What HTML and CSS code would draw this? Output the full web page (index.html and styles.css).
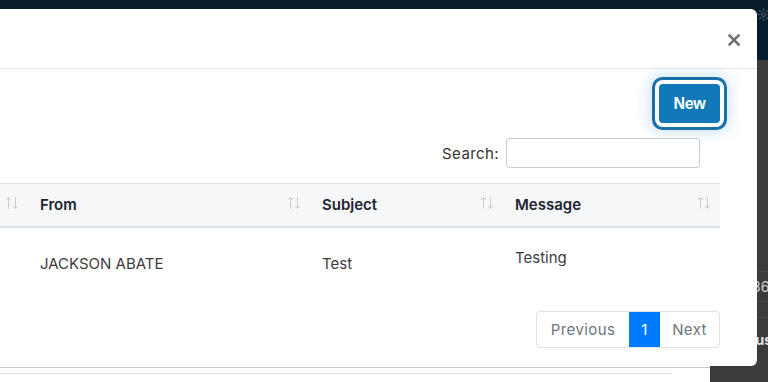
FILE: index.html
```html
<!DOCTYPE html>
<html lang="en">
<head>
  <meta charset="UTF-8" />
  <meta name="viewport" content="width=device-width, initial-scale=1.0"/>
  <title>Messages</title>
  <link rel="stylesheet" href="styles.css">
</head>
<body>

  <div class="topbar">
    <span class="topbar-icon">☼</span>
  </div>

  <div class="page">
    <div class="content">
      <div class="rule rule-dark"></div>
      <div class="rule rule-light"></div>
    </div>
    <div class="side">
      <div class="side-row side-row-first"></div>
      <div class="side-row side-row-num">36</div>
      <div class="side-row side-row-thin"></div>
      <div class="side-row side-row-bold">Status</div>
    </div>
  </div>

  <div class="modal">
    <div class="modal-header">
      <button class="close" aria-label="Close">
        <svg width="12" height="12" viewBox="0 0 12 12">
          <path d="M1.5 1.5 L10.5 10.5 M10.5 1.5 L1.5 10.5" stroke="#737373" stroke-width="2.6" stroke-linecap="square"/>
        </svg>
      </button>
    </div>

    <div class="modal-body">
      <div class="toolbar">
        <button class="btn-new">New</button>
      </div>

      <div class="filter">
        <label for="search">Search:</label>
        <input type="search" id="search">
      </div>

      <table class="messages">
        <thead>
          <tr>
            <th class="col-first"><div class="th-inner"><span></span><span class="sort"></span></div></th>
            <th class="col-from"><div class="th-inner"><span>From</span><span class="sort"></span></div></th>
            <th class="col-subject"><div class="th-inner"><span>Subject</span><span class="sort"></span></div></th>
            <th class="col-message"><div class="th-inner"><span>Message</span><span class="sort"></span></div></th>
          </tr>
        </thead>
        <tbody>
          <tr>
            <td></td>
            <td>JACKSON ABATE</td>
            <td>Test</td>
            <td class="cell-top">Testing</td>
          </tr>
        </tbody>
      </table>

      <div class="pager">
        <div class="pagination">
          <a class="page-link">Previous</a>
          <a class="page-link active">1</a>
          <a class="page-link">Next</a>
        </div>
      </div>
    </div>
  </div>

  <script>
    // sort arrows for every header cell
    const arrows = '<svg width="14" height="14" viewBox="0 0 14 14"><path d="M3.5 13 V1.5 M1 4 L3.5 1.5 L6 4 M10.5 1 V12.5 M8 10 L10.5 12.5 L13 10" stroke="#c9cdd2" stroke-width="1" fill="none"/></svg>';
    document.querySelectorAll('.sort').forEach(el => el.innerHTML = arrows);
  </script>

</body>
</html>
```

FILE: styles.css
```css
body {
  margin: 0;
  background-color: #ffffff;
  font-family: 'Inter', 'Noto Sans', sans-serif;
  overflow: hidden;
  height: 382px;
}

.topbar {
  height: 60px;
  background-color: #061b2c;
  display: flex;
  justify-content: flex-end;
}

.topbar-icon {
  color: #55606a;
  font-size: 14px;
  margin: 6px 0 0 0;
  width: 12px;
  overflow: hidden;
}

.page {
  display: flex;
  height: 322px;
}

.content {
  width: 710px;
  display: flex;
  flex-direction: column;
  justify-content: flex-end;
  padding-bottom: 8px;
  box-sizing: border-box;
}

.rule {
  height: 1px;
}

.rule-dark {
  background-color: #c9c9c9;
  margin-bottom: 5px;
  width: 710px;
}

.rule-light {
  background-color: #e1e1e1;
  width: 672px;
}

.side {
  flex: 1;
  background-color: #3b3b3b;
  color: #cfcfcf;
  font-size: 14px;
  white-space: nowrap;
  overflow: hidden;
}

.side-row {
  border-bottom: 1px solid #4a4a4a;
  padding-left: 42px;
  box-sizing: border-box;
}

.side-row-first {
  height: 212px;
}

.side-row-num {
  height: 30px;
  line-height: 30px;
}

.side-row-thin {
  height: 16px;
}

.side-row-bold {
  font-weight: 700;
  color: #e6e6e6;
  padding-left: 18px;
  height: 48px;
  line-height: 44px;
  border-bottom: 0;
}

/* modal */

.modal {
  position: absolute;
  top: 9px;
  left: -50px;
  width: 807px;
  height: 357px;
  background-color: #fff;
  border-radius: 6px;
  display: flex;
  flex-direction: column;
}

.modal-header {
  height: 59px;
  border-bottom: 1px solid #e6e9ec;
  display: flex;
  justify-content: flex-end;
  align-items: center;
  padding-right: 17px;
}

.close {
  background: none;
  border: none;
  padding: 0;
  display: flex;
  margin-top: 3px;
}

.modal-body {
  padding: 0 37px 0 37px;
}

.toolbar {
  display: flex;
  justify-content: flex-end;
  margin-top: 15px;
}

.btn-new {
  width: 61px;
  height: 39px;
  background-color: #1179b8;
  color: #fff;
  border: none;
  border-radius: 4px;
  font-family: 'Liberation Sans', Arial, sans-serif;
  font-weight: 700;
  font-size: 16px;
  letter-spacing: -0.3px;
  box-shadow: 0 0 0 4px #fff, 0 0 0 7px #1a70a9, 0 0 14px 9px rgba(60, 150, 210, 0.28);
  cursor: pointer;
}

.filter {
  display: flex;
  justify-content: flex-end;
  align-items: center;
  margin-top: 15px;
  margin-right: 20px;
  gap: 7px;
  font-size: 15px;
  letter-spacing: 0.4px;
  color: #333;
}

.filter input {
  width: 194px;
  height: 30px;
  box-sizing: border-box;
  border: 1px solid #c8ccd0;
  border-radius: 3px;
  margin: 0;
}

.messages {
  margin-top: 15px;
  width: 733px;
  border-collapse: collapse;
  font-size: 15px;
}

.messages th {
  background-color: #f6f7f9;
  border-top: 1px solid #dee2e6;
  border-bottom: 2px solid #dee2e6;
  height: 43px;
  padding: 0 9px 0 12px;
  text-align: left;
  font-weight: 600;
  color: #1d2330;
  box-sizing: border-box;
}

.th-inner {
  display: flex;
  justify-content: space-between;
  align-items: center;
}

.sort {
  display: flex;
  margin-top: -4px;
}

.col-first { width: 41px; padding-left: 0 !important; }
.col-from { width: 282px; }
.col-subject { width: 193px; }
.col-message { width: 217px; }

.messages td {
  height: 72px;
  padding: 0 12px;
  color: #3d3d3d;
  box-sizing: border-box;
  vertical-align: middle;
}

.messages td.cell-top {
  vertical-align: top;
  padding-top: 20px;
}

.pager {
  display: flex;
  justify-content: flex-end;
  margin-top: 12px;
}

.pagination {
  display: flex;
  border: 1px solid #dee2e6;
  border-radius: 4px;
  height: 37px;
  box-sizing: border-box;
  overflow: hidden;
}

.page-link {
  display: flex;
  align-items: center;
  justify-content: center;
  color: #6c757d;
  font-size: 15px;
  letter-spacing: 0.4px;
  padding: 0 12px;
  cursor: pointer;
}

.page-link:first-child {
  width: 92px;
  box-sizing: border-box;
}

.page-link.active {
  background-color: #007bff;
  color: #fff;
  width: 31px;
  padding: 0;
}

.page-link:last-child {
  width: 59px;
  box-sizing: border-box;
}
```
